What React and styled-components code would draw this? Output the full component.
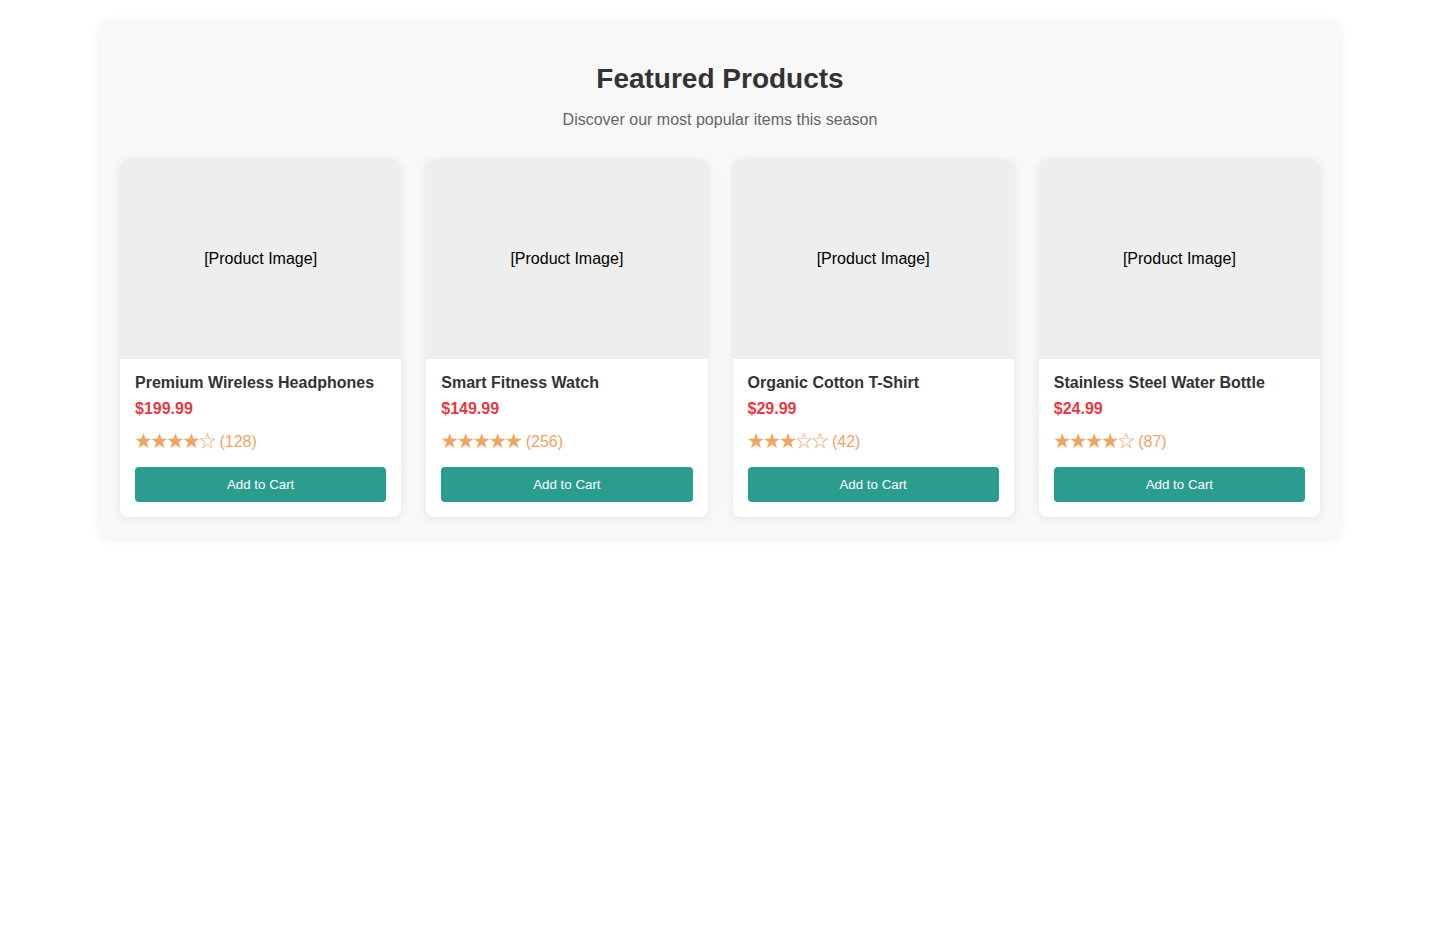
import styled, { createGlobalStyle } from "styled-components";

const GlobalStyle = createGlobalStyle`
  body {
    margin: 0;
    font-family: "Liberation Sans", Arial, sans-serif;
    background: #fff;
  }
`;

const products = [
  { name: "Premium Wireless Headphones", price: "$199.99", rating: 4, reviews: 128 },
  { name: "Smart Fitness Watch", price: "$149.99", rating: 5, reviews: 256 },
  { name: "Organic Cotton T-Shirt", price: "$29.99", rating: 3, reviews: 42 },
  { name: "Stainless Steel Water Bottle", price: "$24.99", rating: 4, reviews: 87 },
];

export default function App() {
  return (
    <>
      <GlobalStyle />
      <Section>
        <Header>
          <Title>Featured Products</Title>
          <Subtitle>Discover our most popular items this season</Subtitle>
        </Header>
        <Grid>
          {products.map((p) => (
            <Card key={p.name}>
              <ImageBox>[Product Image]</ImageBox>
              <Info>
                <Name>{p.name}</Name>
                <Price>{p.price}</Price>
                <Rating>
                  <StarRow>{"★".repeat(p.rating) + "☆".repeat(5 - p.rating)}</StarRow> ({p.reviews})
                </Rating>
                <CartButton>Add to Cart</CartButton>
              </Info>
            </Card>
          ))}
        </Grid>
      </Section>
    </>
  );
}

const Section = styled.section`
  max-width: 1200px;
  margin: 20px auto;
  padding: 20px;
  background: #f8f8f8;
  border-radius: 8px;
  box-shadow: 0 2px 10px rgba(0, 0, 0, 0.08);
`;

const Header = styled.div`
  text-align: center;
  padding-top: 21px;
  margin-bottom: 29px;
`;

const Title = styled.h2`
  margin: 0 0 13px;
  font-size: 28px;
  line-height: 36px;
  color: #333;
`;

const Subtitle = styled.p`
  margin: 0;
  font-size: 16px;
  line-height: 20px;
  color: #666;
`;

const Grid = styled.div`
  display: grid;
  grid-template-columns: repeat(4, 1fr);
  gap: 25px;
`;

const Card = styled.div`
  background: #fff;
  border-radius: 8px;
  overflow: hidden;
  box-shadow: 0 2px 8px rgba(0, 0, 0, 0.08);
`;

const ImageBox = styled.div`
  height: 200px;
  background: #eee;
  display: flex;
  align-items: center;
  justify-content: center;
  font-size: 16px;
  color: #000;
`;

const Info = styled.div`
  padding: 15px;
`;

const Name = styled.h3`
  margin: 0 0 8px;
  font-size: 16px;
  line-height: 18px;
  color: #333;
`;

const Price = styled.div`
  font-size: 16px;
  line-height: 18px;
  font-weight: bold;
  color: #e63946;
  margin-bottom: 11px;
`;

const Rating = styled.div`
  font-size: 16px;
  line-height: 22px;
  color: #f4a261;
  margin-bottom: 14px;
`;

const StarRow = styled.span`
  font-family: "Noto Sans CJK SC", "DejaVu Sans", sans-serif;
  font-size: 17px;
  letter-spacing: -1px;
`;

const CartButton = styled.button`
  display: block;
  width: 100%;
  height: 35px;
  border: none;
  border-radius: 4px;
  background: #2a9d8f;
  color: #fff;
  font-family: "Liberation Sans", Arial, sans-serif;
  font-size: 13.33px;
  cursor: pointer;
`;
